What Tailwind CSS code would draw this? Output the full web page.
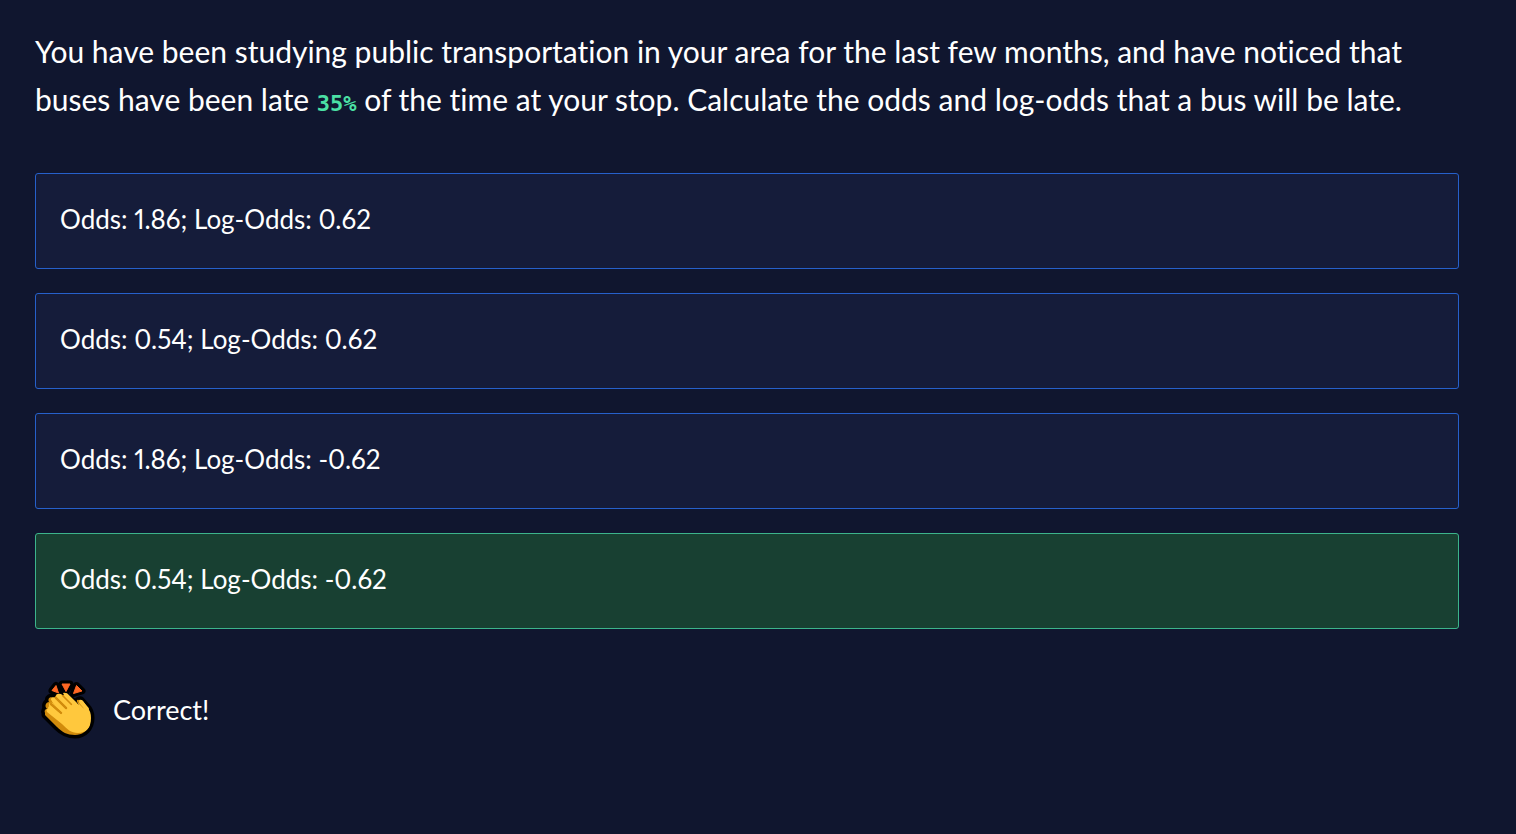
<!DOCTYPE html>
<html lang="en">
<head>
<meta charset="utf-8">
<meta name="viewport" content="width=device-width, initial-scale=1">
<title>Odds and Log-Odds</title>
<script src="https://cdn.jsdelivr.net/npm/@tailwindcss/browser@4"></script>
</head>
<body class="min-h-screen bg-[#10162f] font-['Lato',sans-serif] text-white [font-variant-ligatures:none]">
<main class="pt-[27px] pr-[57px] pb-12 pl-[35px]">
  <p class="text-[30px] leading-[48px]">You have been studying public transportation in your area for the last few months, and have noticed that buses have been late <code class="font-['DejaVu_Sans_Mono',monospace] text-[22px] leading-none font-bold text-[#4be0a5]">35%</code> of the time at your stop. Calculate the odds and log-odds that a bus will be late.</p>
  <div class="mt-[50px] flex flex-col gap-6 text-[26px] leading-9 proportional-nums">
    <button type="button" class="h-24 rounded-[3px] border border-[#2660cb] bg-[#151c3a] px-6 pb-1 text-left">Odds: 1.86; Log-Odds: 0.62</button>
    <button type="button" class="h-24 rounded-[3px] border border-[#2660cb] bg-[#151c3a] px-6 pb-1 text-left">Odds: 0.54; Log-Odds: 0.62</button>
    <button type="button" class="h-24 rounded-[3px] border border-[#2660cb] bg-[#151c3a] px-6 pb-1 text-left">Odds: 1.86; Log-Odds: -0.62</button>
    <button type="button" class="h-24 rounded-[3px] border border-[#3cb48c] bg-[#184032] px-6 pb-1 text-left">Odds: 0.54; Log-Odds: -0.62</button>
  </div>
  <div class="mt-[41px] flex items-center" role="status">
    <svg class="mr-[3px] -ml-[5px] size-20 shrink-0" viewBox="0 0 80 80" aria-hidden="true">
      <g stroke="#000" stroke-width="7" stroke-linejoin="round" fill="#000">
        <path d="M22 20.500 26 15.500 28.500 23ZM32 14H40L36 21.500ZM46.500 15.500 52 21 43.500 23.500Z"/>
        <path d="M15 43C14 41 15 39 17 39C14 36 16 32 19 32C17 28 21 26 24 28L27 24Q29 21 33 24L47 34Q47 29 51 30L57 37Q61 41 61 48C61 58 54 65 45 65C37 65 32 62 27 57L15 45Z"/>
      </g>
      <path fill="#d18b0c" d="M15 43C14 41 15 39 17 39C14 36 16 32 19 32C17 28 21 26 24 28L27 24L60 55C57 61 52 65 45 65C37 65 32 62 27 57L15 45Z"/>
      <path fill="#ffc83d" d="M33 23Q35 22 37 24L49 35Q46 31 49 30Q51 29 53 31L57 37Q61 41 61 48C61 58 56 63 48 63C41 63 37 59 32 54L17 42Q15 38 20 39L23 41L19 36Q18 32 23 33L28 37L21 30Q21 26 26 28L29 30L26 27Q26 23 31 24L35 27Z"/>
      <path fill="none" stroke="#d18b0c" stroke-width="2.500" stroke-linecap="round" d="M33 26 41 34M26 28 36 38M21 34 31 43M48 31 54 37"/>
      <path fill="none" stroke="#ffc83d" stroke-width="4" stroke-linecap="round" d="M36 25 45 34M29 26 40 37M24 31 36 43M20 38 31 47M51 32 57 39"/>
      <path fill="#ff6723" stroke="#ff6723" stroke-width="1" stroke-linejoin="round" d="M22 20.500 26 15.500 28.500 23ZM32 14H40L36 21.500ZM46.500 15.500 52 21 43.500 23.500Z"/>
    </svg>
    <p class="text-[27px] leading-9">Correct!</p>
  </div>
</main>
</body>
</html>
